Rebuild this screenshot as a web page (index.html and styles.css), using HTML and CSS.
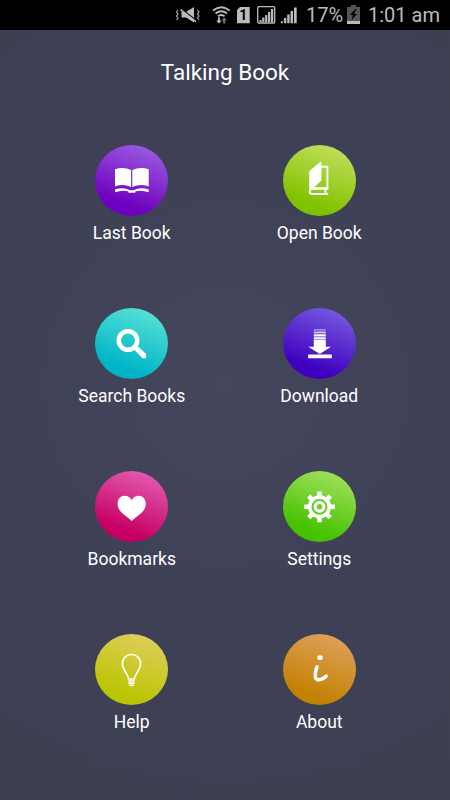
FILE: index.html
```html
<!DOCTYPE html>
<html lang="en">
<head>
  <meta charset="UTF-8">
  <meta name="viewport" content="width=device-width, initial-scale=1.0">
  <title>Talking Book</title>
  <link rel="stylesheet" href="styles.css">
</head>
<body>
  <div class="status-bar">
    <svg class="status-icons" width="130" height="30" viewBox="0 0 130 30">
      <!-- vibrate / mute -->
      <g fill="none" stroke="#aaa" stroke-width="1.2">
        <path d="M3 10l-1.500 2 1.500 2-1.500 2 1.500 2-1.500 2"/>
        <path d="M22.500 10l1.500 2-1.500 2 1.500 2-1.500 2 1.500 2"/>
      </g>
      <path d="M6.500 12h4.500l8-5v15.500l-8-5H6.500z" fill="#bbb"/>
      <path d="M6.500 9l15.500 12" stroke="#000" stroke-width="1.500"/>
      <path d="M5.500 9.700l15.500 12" stroke="#bbb" stroke-width="1.600"/>
      <!-- wifi -->
      <g fill="none" stroke="#bbb" stroke-width="1.900">
        <path d="M38 10.500q8.300-6.600 16.600 0"/>
        <path d="M40.600 13.400q5.700-4.500 11.400 0"/>
        <path d="M43 16.300q3.300-2.600 6.600 0"/>
      </g>
      <path d="M43 17.500h2v3h1.700L44 23.500l-2.700-3H43z" fill="#bbb"/>
      <path d="M48.200 23.500v-3h-1.600l2.600-3 2.600 3h-1.600v3z" fill="#777"/>
      <!-- sim -->
      <path d="M65 7h9.700v16.300H62V10z" fill="#bbb"/>
      <text class="sim-number" x="68.200" y="20.200">1</text>
      <!-- signal -->
      <rect x="82.700" y="6.700" width="17" height="16.300" rx="1" fill="none" stroke="#bbb" stroke-width="1.300"/>
      <path d="M84.500 22v-2h2v2zM87.200 22v-4.500h2.200V22zM90.100 22v-7h2.200v7zM93 22V12h2.200v10zM95.900 22V9h2.300v13z" fill="#bbb"/>
      <path d="M105.800 23.200v-2h2v2zM108.900 23.200v-5.200h2.400v5.200zM112.200 23.200v-8.700h2.400v8.700zM115.500 23.200V11h2.500v12.200zM119 23.200V7.500h2.700v15.700z" fill="#bbb"/>
    </svg>
    <span class="battery-level">17%</span>
    <svg class="battery" width="13" height="19" viewBox="0 0 13 19">
      <path d="M4 0h5v2h4v17H0V2h4z" fill="#555"/>
      <path d="M0 16h13v3H0z" fill="#bbb"/>
      <path d="M8.500 4L3 10h3l-1.500 5L10 9H7l2.500-5z" fill="#000"/>
    </svg>
    <span class="clock">1:01 am</span>
  </div>

  <h1>Talking Book</h1>

  <div class="menu">
    <a class="item">
      <span class="circle last-book">
        <svg viewBox="0 0 73 71">
          <path d="M20 24.300q8.300-2.800 16.100.7v17.100q-7.800-3.600-16.100-.7zM37.300 25q7.900-3.500 16.400-.7v17.100q-8.500-2.900-16.400.7z"/>
          <path d="M20 44.500q8.300-3 15.100.8h3.400q6.800-3.800 15.200-.8v2.700q-8.200-2.800-13.400-.6v1.100h-6.900v-1.100q-5.200-2.200-13.400.6z"/>
        </svg>
      </span>
      <span class="label">Last Book</span>
    </a>
    <a class="item">
      <span class="circle open-book">
        <svg viewBox="0 0 73 71">
          <path d="M26.200 27.500q0-1.300 1-2.200L37.200 17h1.200v18.500l-7.600 7.300q-2.600.4-4.600 3z"/>
          <path class="line thick" d="M38 21.800h6.400v21.400H30"/>
          <path class="line thick" d="M45.200 43.800H29.300a2.600 2.600 0 0 0 0 5.200h15.900M42.800 44q-1.300 2.300 0 4.700"/>
        </svg>
      </span>
      <span class="label">Open Book</span>
    </a>
    <a class="item">
      <span class="circle search">
        <svg viewBox="0 0 73 71">
          <circle cx="33" cy="32.500" r="9.200" fill="none" stroke="#fff" stroke-width="4.600"/>
          <path d="M37.800 40.300l3.500-3.500 9.800 9.300v4.200h-3.500z"/>
        </svg>
      </span>
      <span class="label">Search Books</span>
    </a>
    <a class="item">
      <span class="circle download">
        <svg viewBox="0 0 73 71">
          <path opacity=".6" d="M30.800 21.300h12v1.200h-12z"/>
          <path opacity=".8" d="M30.800 23.600h12v1.700h-12z"/>
          <path d="M30.800 26.200h12v2.300h-12zM30.800 29.200h12v2.200h-12zM30.800 31.900h12v6.800H48L36.800 46 25.300 38.700h5.500zM25.200 46.500h23.600v3.800H25.200z"/>
        </svg>
      </span>
      <span class="label">Download</span>
    </a>
    <a class="item">
      <span class="circle bookmarks">
        <svg viewBox="0 0 73 71">
          <path d="M36.700 50q-3.500-3.200-7.500-6.200c-4.300-3.300-6.600-6.800-6.600-11 0-4.700 3.100-8 7.200-8 3.200 0 5.600 1.600 6.900 4.400 1.300-2.800 3.700-4.400 6.900-4.400 4.100 0 7.200 3.300 7.200 8 0 4.200-2.300 7.700-6.600 11Q40.200 46.800 36.700 50z"/>
        </svg>
      </span>
      <span class="label">Bookmarks</span>
    </a>
    <a class="item">
      <span class="circle settings">
        <svg viewBox="0 0 73 71">
          <g fill="none" stroke="#fff" transform="translate(36.500 35.800)">
            <circle r="9.800" stroke-width="3.600"/>
            <circle r="4.300" stroke-width="3.200"/>
            <path stroke-width="4.600" d="M0-10.500v-4.900M0 10.500v4.900M-10.500 0h-4.900M10.500 0h4.900"/>
            <path stroke-width="4.600" d="M7.500-7.500l3.300-3.300M-7.500-7.500l-3.300-3.300M7.500 7.500l3.300 3.300M-7.500 7.500l-3.300 3.300"/>
          </g>
        </svg>
      </span>
      <span class="label">Settings</span>
    </a>
    <a class="item">
      <span class="circle help">
        <svg viewBox="0 0 73 71">
          <path class="line" d="M33.600 45c0-4.800-6.200-8.500-6.200-15.400a9.100 9.100 0 0 1 18.200 0c0 6.900-6.200 10.600-6.200 15.400z"/>
          <path class="line" d="M33.300 47h6.400M33.300 49.100h6.400M34 51.200h5"/>
        </svg>
      </span>
      <span class="label">Help</span>
    </a>
    <a class="item">
      <span class="circle about">
        <svg viewBox="0 0 73 71">
          <ellipse cx="37" cy="23.700" rx="2.700" ry="2.400"/>
          <path d="M34 32.700c-1.200 4-2.500 8-1.500 11 1.400 3.700 7.700 1.700 10.700-1.700" fill="none" stroke="#fff" stroke-width="3.500" stroke-linecap="round"/>
        </svg>
      </span>
      <span class="label">About</span>
    </a>
  </div>
</body>
</html>
```

FILE: styles.css
```css
* {
  margin: 0;
  padding: 0;
  box-sizing: border-box;
}

body {
  height: 800px;
  background: radial-gradient(circle at 50% 48%, #44465c 0, #3e4055 240px, #3d3f53 100%);
  font-family: Roboto, sans-serif;
  color: #fff;
}

.status-bar {
  display: flex;
  align-items: center;
  height: 30px;
  padding-left: 175px;
  background: #000;
  color: #bbb;
  font-size: 20px;
  line-height: 30px;
  white-space: nowrap;
}

.status-icons {
  flex: none;
}

.sim-number {
  font-size: 14px;
  font-weight: bold;
  text-anchor: middle;
  fill: #000;
}

.battery-level {
  width: 42px;
  padding-left: 1px;
}

.battery {
  flex: none;
  margin-top: -1px;
}

.clock {
  margin-left: 8px;
}

h1 {
  margin-top: 27px;
  font-size: 22.5px;
  font-weight: 400;
  line-height: 30px;
  text-align: center;
}

.menu {
  display: grid;
  grid-template-columns: 1fr 1fr;
  grid-auto-rows: 163px;
  padding: 57.6px 37px 0 38px;
}

.item {
  display: flex;
  flex-direction: column;
  align-items: center;
}

.circle {
  width: 73px;
  height: 71px;
  border-radius: 50%;
}

.circle svg {
  display: block;
  width: 73px;
  height: 71px;
  fill: #fff;
}

.circle .line {
  fill: none;
  stroke: #fff;
  stroke-width: 1.6;
}

.circle .thick {
  stroke-width: 1.9;
}

.last-book { background: linear-gradient(200deg, #9d60e2 5%, #6e00bf 78%); }
.open-book { background: linear-gradient(200deg, #c6e060 5%, #7fc200 78%); }
.search { background: linear-gradient(200deg, #5ce4d8 5%, #00b4c6 78%); }
.download { background: linear-gradient(200deg, #785ee0 5%, #4000c0 78%); }
.bookmarks { background: linear-gradient(200deg, #e460b6 5%, #c60062 78%); }
.settings { background: linear-gradient(200deg, #a6e262 5%, #46c200 78%); }
.help { background: linear-gradient(200deg, #e0cf60 5%, #bac400 82%); }
.about { background: linear-gradient(200deg, #e0a25e 5%, #c28100 82%); }

.label {
  margin-top: 6px;
  font-size: 17.5px;
  line-height: 22px;
}
```
